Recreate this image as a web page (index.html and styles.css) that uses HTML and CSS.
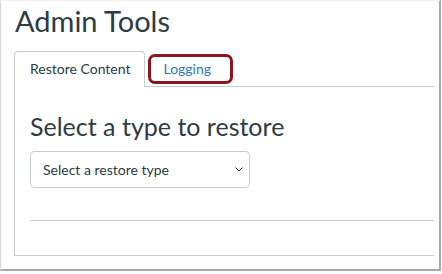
FILE: index.html
```html
<!DOCTYPE html>
<html lang="en">
<head>
  <meta charset="UTF-8">
  <meta name="viewport" content="width=device-width, initial-scale=1.0">
  <title>Admin Tools</title>
  <link rel="stylesheet" href="styles.css">
</head>
<body>
  <div class="screen">
    <h1>Admin Tools</h1>

    <div class="tabs">
      <div class="tab active">Restore Content</div>
      <div class="tab link">
        Logging
        <span class="highlight"></span>
      </div>
    </div>

    <div class="panel">
      <h2>Select a type to restore</h2>
      <div class="select-box">
        <span>Select a restore type</span>
        <svg width="8" height="5" viewBox="0 0 8 5">
          <path d="M0.5 0.5 L4 4 L7.5 0.5" fill="none" stroke="#2d3b45" stroke-width="1"/>
        </svg>
      </div>
      <div class="divider"></div>
    </div>
  </div>
</body>
</html>
```

FILE: styles.css
```css
* {
  margin: 0;
  padding: 0;
  box-sizing: border-box;
}

body {
  font-family: Lato, "Open Sans", sans-serif;
  background: white;
  color: #2d3b45;
}

.screen {
  width: 441px;
  height: 271px;
  border-left: 1px solid #d6d6d6;
  border-top: 1px solid #f2f2f2;
  border-right: 2px solid #a8a8a8;
  border-bottom: 2px solid #a8a8a8;
  padding-left: 13px;
  overflow: hidden;
}

h1 {
  font-size: 29px;
  font-weight: 400;
  line-height: 1.2;
  margin: 3px 0 12px 1px;
}

.tabs {
  display: flex;
  border-bottom: 1px solid #c7cdd1;
  margin-right: 5px;
}

.tab {
  font-size: 14px;
  line-height: 1.2;
  padding: 9px 14px 8px 15px;
  border: 1px solid transparent;
  border-bottom: none;
  position: relative;
}

.tab.active {
  border-color: #c7cdd1;
  border-radius: 4px 4px 0 0;
  background: white;
  margin-bottom: -1px;
  padding-bottom: 9px;
}

.tab.link {
  color: #2b7abc;
  padding-left: 17px;
}

.highlight {
  position: absolute;
  left: 2px;
  top: 2px;
  width: 85px;
  height: 30px;
  border: 3px solid #8c1520;
  border-radius: 7px;
}

.panel {
  border-left: 1px solid #c7cdd1;
  border-bottom: 1px solid #c7cdd1;
  margin-right: 5px;
  height: 169px;
  padding: 24px 0 0 15px;
}

h2 {
  font-size: 25px;
  font-weight: 400;
  line-height: 1.2;
  margin-bottom: 10px;
}

.select-box {
  width: 220px;
  height: 37px;
  border: 1px solid #c7cdd1;
  border-radius: 4px;
  display: flex;
  align-items: center;
  justify-content: space-between;
  padding: 0 6px 0 12px;
  font-size: 14px;
}

.divider {
  height: 1px;
  background: #c7cdd1;
  margin-top: 32px;
}
```
